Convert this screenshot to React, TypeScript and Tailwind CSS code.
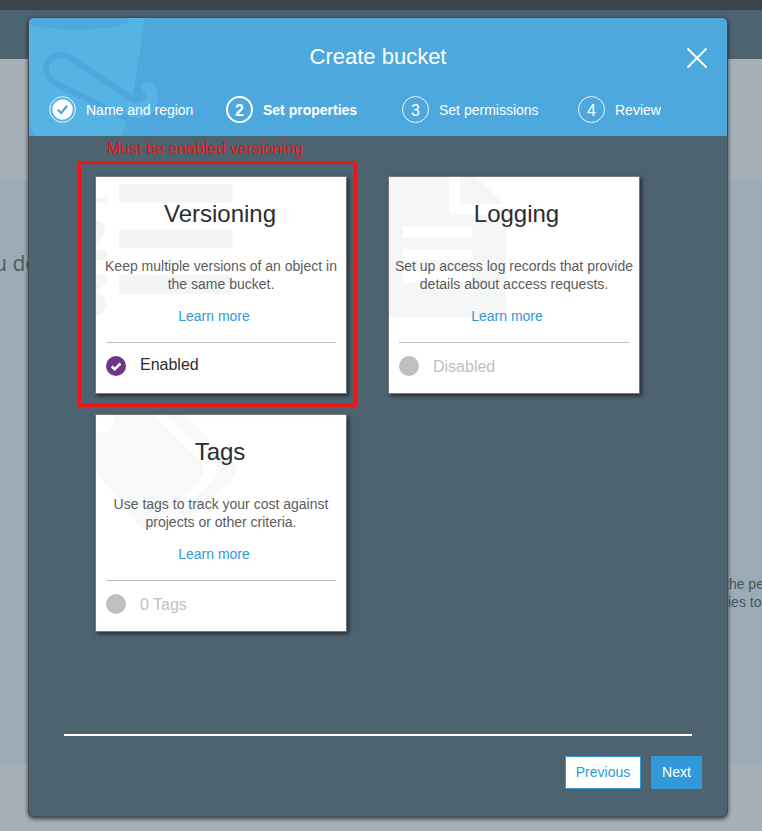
import type { ReactNode } from "react";

type Step = { n: number; label: string; width: string; state: "done" | "current" | "todo" };

const steps: Step[] = [
  { n: 1, label: "Name and region", width: "w-[177px]", state: "done" },
  { n: 2, label: "Set properties", width: "w-[176px]", state: "current" },
  { n: 3, label: "Set permissions", width: "w-[176px]", state: "todo" },
  { n: 4, label: "Review", width: "w-[120px]", state: "todo" },
];

function BucketArt() {
  return (
    <svg className="absolute left-0 top-0" width="132" height="118" viewBox="0 0 132 118">
      <path d="M0 0H116L104 77L97 103Q96 112 92 118H6Q1 110 0 98Z" fill="#56b4e4" />
      <ellipse cx="48" cy="2" rx="52" ry="9.5" fill="#4da8dd" />
      <path
        d="M20 50.7C20 44 26 39.7 32 39.7Q36 39.7 39 42L102 84Q109 87 116 82Q119 77 114 73Q110 66 118 63C124 63 129 72 129 80C130 92 121 99 110 100C104 100 98 97 94 95L28 63Q20 57 20 50.7Z"
        fill="#56b4e4"
        stroke="#4da8dd"
        strokeWidth="12"
        paintOrder="stroke"
      />
    </svg>
  );
}

function StepBadge({ step }: { step: Step }) {
  if (step.state === "done") {
    return (
      <svg width="27" height="27" viewBox="0 0 27 27">
        <circle cx="13.5" cy="13.5" r="12.8" fill="none" stroke="#fff" strokeOpacity="0.9" strokeWidth="1" />
        <circle cx="13.5" cy="13.5" r="10.2" fill="#fff" />
        <path d="M8.8 13.8L12.2 17.2L18 9.8" fill="none" stroke="#4da8dd" strokeWidth="2.2" />
      </svg>
    );
  }
  return (
    <span
      className={
        step.state === "current"
          ? "flex h-[27px] w-[27px] items-center justify-center rounded-full border-2 border-white pt-0.5 text-base font-bold"
          : "flex h-[27px] w-[27px] items-center justify-center rounded-full border border-white/90 pt-0.5 text-base"
      }
    >
      {step.n}
    </span>
  );
}

function VersioningArt() {
  return (
    <svg className="absolute left-0 top-0" width="250" height="160" fill="#f4f6f6">
      <rect x="0" y="21" width="11" height="5" />
      <path d="M0 43Q9 43 9 53Q9 59 0 66Z" />
      <rect x="0" y="73" width="11" height="10" />
      <path d="M0 98H10V106L3 113L0 115Z" />
      <path d="M0 116Q10 116 10.500 128Q9 138 0 139Z" />
      <rect x="23" y="7" width="113.500" height="19" rx="1" />
      <rect x="23" y="52.500" width="113.500" height="19" rx="1" />
      <rect x="23" y="98" width="113.500" height="19" rx="1" />
    </svg>
  );
}

function LoggingArt() {
  return (
    <svg className="absolute left-0 top-0" width="250" height="160" fill="#f5f7f7">
      <path d="M0 0H60V30Q60 38 68 38H117V140H0Z" />
      <path d="M71 0H88L115 27H71Z" />
      <g fill="#fff">
        <rect x="14" y="49" width="69" height="12" rx="3" />
        <rect x="14" y="72" width="69" height="11" rx="3" />
        <rect x="14" y="94" width="69" height="12" rx="3" />
      </g>
    </svg>
  );
}

function TagsArt() {
  return (
    <svg className="absolute left-0 top-0" width="250" height="160" fill="#f7f9f8">
      <path d="M0 0H57L104 46Q111 55 104 64L56 113Q50 117 44 112L0 56Z" />
      <path d="M71 0H88L137 48Q143 55 137 63L87 112L77 104L117 65Q125 55 117 46Z" />
      <circle cx="7" cy="7" r="11" fill="#fff" />
    </svg>
  );
}

type CardProps = {
  title: string;
  titleClass: string;
  art: ReactNode;
  lines: [string, string];
  status: string;
  enabled?: boolean;
};

function Card({ title, titleClass, art, lines, status, enabled }: CardProps) {
  return (
    <section className="relative h-[218px] w-[252px] border border-[#777] bg-white shadow-[2px_2px_4px_rgba(0,0,0,0.55)]">
      {art}
      <div className="relative flex h-full flex-col">
        <h2 className={`mt-[23px] text-center text-[24px] leading-7 text-[#2d2d2d] ${titleClass}`}>{title}</h2>
        <p className="mt-[29px] whitespace-nowrap text-center text-sm leading-[18px] text-[#5c5c5c]">
          {lines[0]}
          <br />
          {lines[1]}
        </p>
        <a className="mt-[14px] pr-[14px] text-center text-sm leading-[18px] text-[#3199d8]">Learn more</a>
        <div className="mx-[10px] mt-[17px] h-px bg-[#bcbcbc]" />
        <div className="ml-[10px] mt-[13px] flex h-5 items-center gap-[14px]">
          <svg width="20" height="20" viewBox="0 0 20 20">
            <circle cx="10" cy="10" r="10" fill={enabled ? "#6f3686" : "#bec0c0"} />
            {enabled && <path d="M5.700 10.500L8.700 13.200L14.500 7.500" fill="none" stroke="#fff" strokeWidth="2.500" />}
          </svg>
          <span
            className={
              enabled
                ? "-mt-0.5 text-base leading-5 text-[#2d2d2d]"
                : "pt-0.5 text-base leading-5 text-[#bec0c0]"
            }
          >
            {status}
          </span>
        </div>
      </div>
    </section>
  );
}

function Backdrop() {
  return (
    <div className="flex h-[831px] flex-col">
      <div className="h-[10px] bg-linear-to-b from-[#3c484f] to-[#38444b]" />
      <div className="h-[49px] bg-[#4d6370]" />
      <div className="h-[120px] bg-[#a5b0b7]" />
      <div className="h-[585px] overflow-hidden bg-[#9bacb6] text-[#48545a]">
        <div className="-ml-[6px] whitespace-nowrap pt-[70px] font-['Noto_Sans',sans-serif] text-[21px] leading-7 text-[#505e66]">
          u do
        </div>
        <div className="ml-[725px] mt-[298px] whitespace-nowrap text-sm leading-[18px]">the pe</div>
        <div className="ml-[721px] whitespace-nowrap text-sm leading-[18px]">cies to</div>
      </div>
      <div className="h-[67px] bg-[#a5b0b7]" />
    </div>
  );
}

export default function App() {
  return (
    <div className="relative h-[831px] w-[762px] overflow-hidden font-['Liberation_Sans',Arial,sans-serif]">
      <Backdrop />
      <div className="absolute left-[28px] top-[17px] flex h-[800px] w-[700px] flex-col overflow-hidden rounded-md border border-[#454b4f] bg-[#4d6370] shadow-[0_2px_4px_rgba(0,0,0,0.65)]">
        <header className="relative h-[118px] shrink-0 bg-[#4da8dd] text-white">
          <BucketArt />
          <div className="relative flex h-[78px] items-center">
            <h1 className="w-full pb-0.5 text-center text-[22px]">Create bucket</h1>
            <svg className="absolute left-[657px] top-[29px]" width="22" height="22" stroke="#fff" strokeWidth="1.800">
              <path d="M1.500 1.500L20.500 20.500M20.500 1.500L1.500 20.500" />
            </svg>
          </div>
          <nav className="relative flex pl-5">
            {steps.map((step) => (
              <div key={step.n} className={`flex items-center gap-[10px] ${step.width}`}>
                <StepBadge step={step} />
                <span className={step.state === "current" ? "text-sm font-bold" : "text-sm"}>{step.label}</span>
              </div>
            ))}
          </nav>
        </header>
        <main className="grid h-[598px] shrink-0 grid-cols-[252px_252px] content-start gap-x-[41px] gap-y-[20px] pl-[66px] pt-[40px]">
          <Card
            title="Versioning"
            titleClass="pr-0.5"
            art={<VersioningArt />}
            lines={["Keep multiple versions of an object in", "the same bucket."]}
            status="Enabled"
            enabled
          />
          <Card
            title="Logging"
            titleClass="pl-[5px]"
            art={<LoggingArt />}
            lines={["Set up access log records that provide", "details about access requests."]}
            status="Disabled"
          />
          <Card
            title="Tags"
            titleClass="pr-0.5"
            art={<TagsArt />}
            lines={["Use tags to track your cost against", "projects or other criteria."]}
            status="0 Tags"
          />
        </main>
        <footer className="ml-[35px] mr-[25px]">
          <div className="h-0.5 w-[628px] bg-white" />
          <div className="mt-[20px] flex justify-end gap-[10px] text-sm">
            <button className="h-[33px] w-[76px] border border-[#3199d8] bg-white pb-0.5 text-[#3199d8]">
              Previous
            </button>
            <button className="h-[33px] w-[51px] bg-[#3199d8] pb-0.5 text-white">Next</button>
          </div>
        </footer>
      </div>
      <div className="absolute left-[107px] top-[139px] whitespace-nowrap text-base leading-5 tracking-[0.02px] text-[#ee1111]">
        Must be enabled versioning
      </div>
      <div className="absolute left-[78px] top-[161px] h-[246px] w-[279px] border-3 border-[#f01414]" />
    </div>
  );
}
